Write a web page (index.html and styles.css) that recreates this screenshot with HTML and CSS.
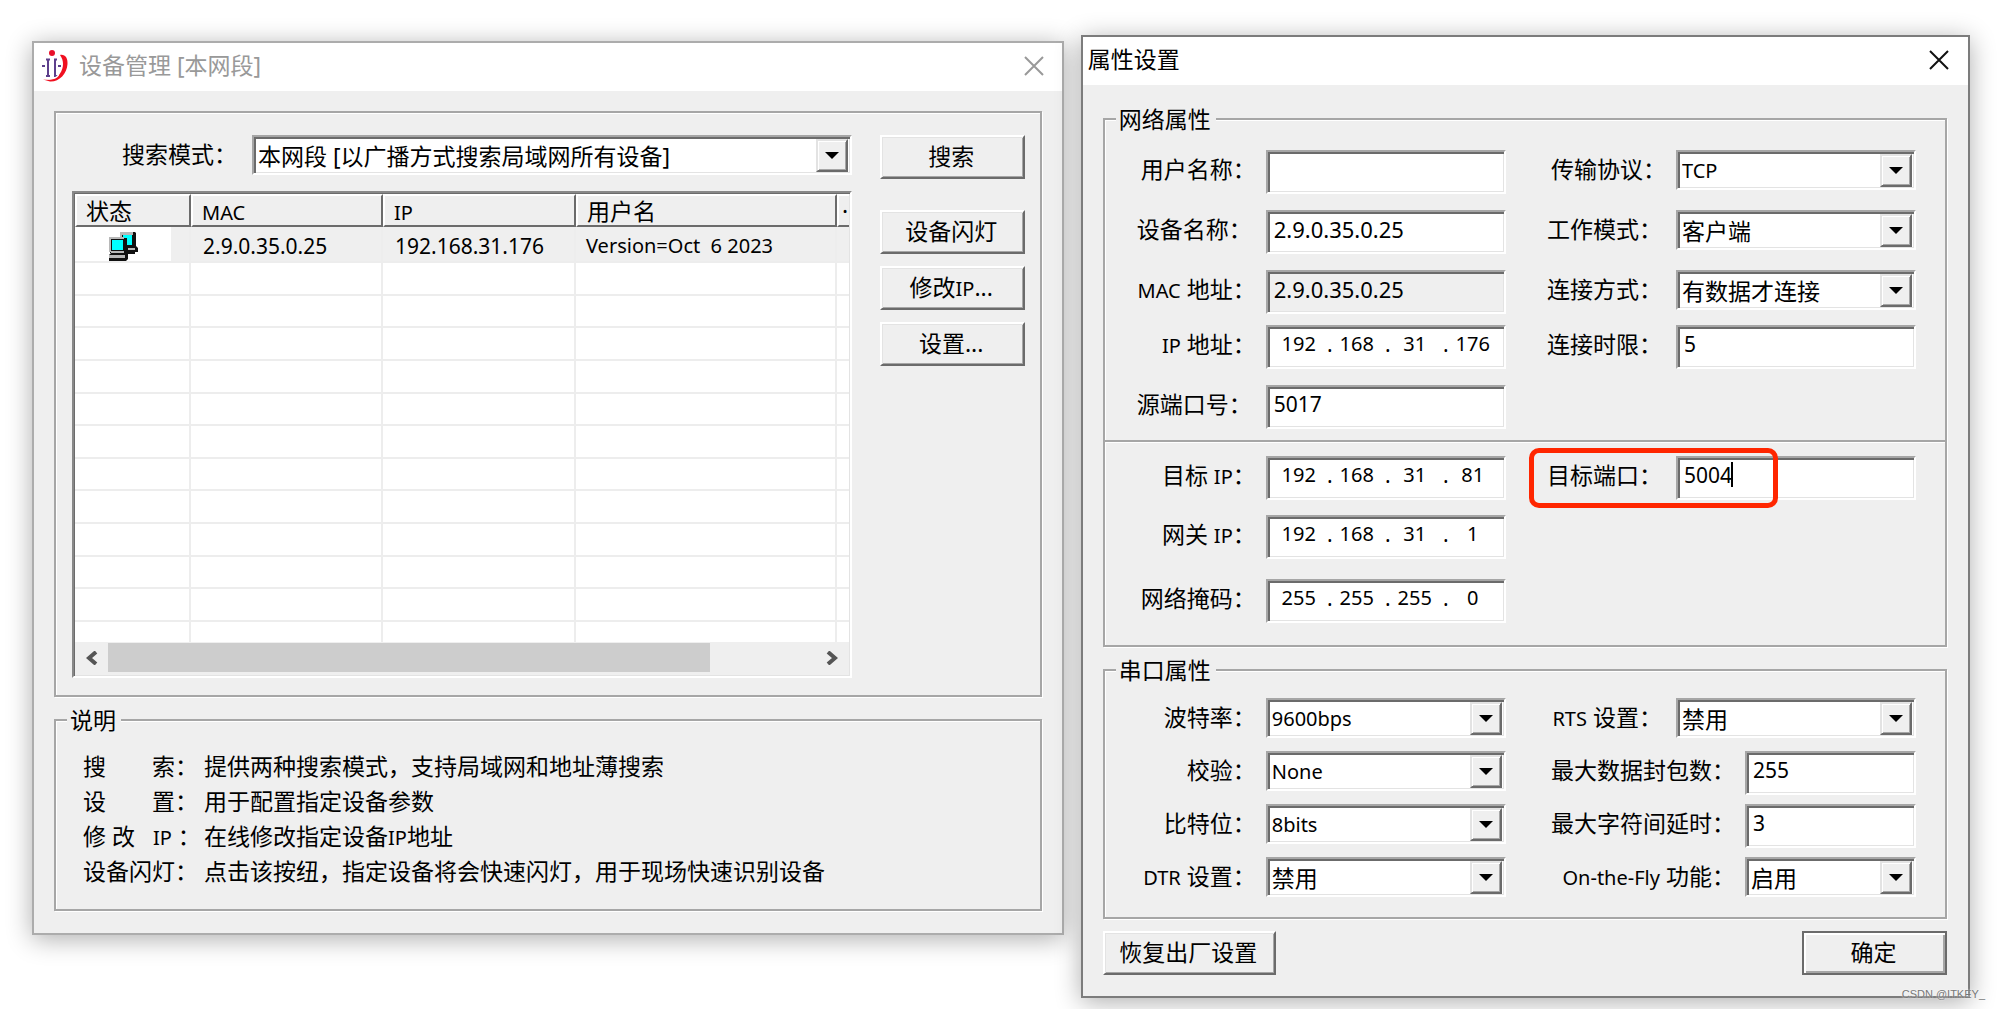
FILE: index.html
```html
<!DOCTYPE html>
<html lang="zh-CN">
<head>
<meta charset="utf-8">
<meta name="viewport" content="width=device-width, initial-scale=1">
<title>设备管理</title>
<link rel="stylesheet" href="styles.css">
</head>
<body>
<main class="desktop">

  <section class="window window-devices" aria-label="设备管理">
    <header class="titlebar">
      <svg class="logo" viewBox="0 0 26 32" aria-hidden="true">
        <circle cx="10" cy="3" r="3" fill="#e8102a"/>
        <g fill="none" stroke="#5d3f8c" stroke-width="2">
          <path d="M4 9.500h4M6 9v17M4 26h4M12 9.500h3M13 9v17M12 26h4"/>
          <path d="M0 16h3M16 16h3"/>
        </g>
        <path d="M18 5c5-1 8 3 7.500 9C25 24 17 32 8 31.500L1 29.500c9 1 14-1 17-6 4-6 4-13 0-18.500z" fill="#f01020"/>
        <path d="M2 28.500c6 1 11 0 14-4l1 1c-3 4-8 5-15 3z" fill="#fff"/>
      </svg>
      <h1 class="title title-inactive">设备管理 [本网段]</h1>
      <button class="close close-inactive" type="button" aria-label="关闭">
        <svg viewBox="0 0 20 20"><path d="M1 1l18 18M19 1L1 19"/></svg>
      </button>
    </header>

    <div class="content">
      <div class="group search-group">
        <div class="search-main">
          <div class="search-row">
            <label for="mode">搜索模式：</label>
            <span class="combo">
              <select id="mode"><option>本网段 [以广播方式搜索局域网所有设备]</option></select>
              <span class="arrow"></span>
            </span>
          </div>
          <div class="list">
            <table class="devices">
              <colgroup><col class="c-state"><col class="c-mac"><col class="c-ip"><col class="c-user"><col></colgroup>
              <thead>
                <tr><th>状态</th><th><span class="en">MAC</span></th><th><span class="en">IP</span></th><th>用户名</th><th>·</th></tr>
              </thead>
              <tbody>
                <tr class="selected">
                  <td class="state">
                    <span class="state-box">
                      <svg viewBox="0 0 30 30" role="img" aria-label="在线">
                        <path d="M12 1h15l1 1v13l2 2v4h-3v2H17V14H12z" fill="#111"/>
                        <path d="M12 1h13v3H12zM12 4h2v4h-2z" fill="#b8b8b8"/>
                        <path d="M15 4h9v10h-9z" fill="#0ff"/>
                        <path d="M20 17h7v2h-7z" fill="#b8b8b8"/>
                        <path d="M2 7h17v15h1v6l-2 2H1v-6l2-2H2z" fill="#111"/>
                        <path d="M1 6h15v2H3v13H1zM1 24h16v3H1z" fill="#b8b8b8"/>
                        <path d="M4 9h11v10H4z" fill="#0ff"/>
                        <path d="M3 20h13v2H3z" fill="#b8b8b8"/>
                      </svg>
                    </span>
                  </td>
                  <td>2.9.0.35.0.25</td><td>192.168.31.176</td><td class="user">Version=Oct&nbsp; 6 2023</td><td></td>
                </tr>
                <tr><td></td><td></td><td></td><td></td><td></td></tr>
                <tr><td></td><td></td><td></td><td></td><td></td></tr>
                <tr><td></td><td></td><td></td><td></td><td></td></tr>
                <tr><td></td><td></td><td></td><td></td><td></td></tr>
                <tr><td></td><td></td><td></td><td></td><td></td></tr>
                <tr><td></td><td></td><td></td><td></td><td></td></tr>
                <tr><td></td><td></td><td></td><td></td><td></td></tr>
                <tr><td></td><td></td><td></td><td></td><td></td></tr>
                <tr><td></td><td></td><td></td><td></td><td></td></tr>
                <tr><td></td><td></td><td></td><td></td><td></td></tr>
                <tr><td></td><td></td><td></td><td></td><td></td></tr>
                <tr class="partial"><td></td><td></td><td></td><td></td><td></td></tr>
              </tbody>
            </table>
            <div class="scrollbar">
              <button class="scroll-btn" type="button" aria-label="向左滚动"><svg viewBox="0 0 12 14"><path d="M10 1L3 7l7 6"/></svg></button>
              <div class="track"><div class="thumb"></div></div>
              <button class="scroll-btn" type="button" aria-label="向右滚动"><svg viewBox="0 0 12 14"><path d="M2 1l7 6-7 6"/></svg></button>
            </div>
          </div>
        </div>
        <div class="actions">
          <button class="btn btn-search" type="button">搜索</button>
          <button class="btn" type="button">设备闪灯</button>
          <button class="btn" type="button">修改<span class="en">IP</span>...</button>
          <button class="btn" type="button">设置...</button>
        </div>
      </div>

      <fieldset class="group">
        <legend>说明</legend>
        <dl class="help">
          <dt>搜　　索：</dt><dd>提供两种搜索模式，支持局域网和地址薄搜索</dd>
          <dt>设　　置：</dt><dd>用于配置指定设备参数</dd>
          <dt>修 改&nbsp;&nbsp; <span class="en">IP</span> ：</dt><dd>在线修改指定设备<span class="en">IP</span>地址</dd>
          <dt>设备闪灯：</dt><dd>点击该按纽，指定设备将会快速闪灯，用于现场快速识别设备</dd>
        </dl>
      </fieldset>
    </div>
  </section>

  <section class="window window-props" aria-label="属性设置">
    <header class="titlebar">
      <h2 class="title">属性设置</h2>
      <button class="close" type="button" aria-label="关闭">
        <svg viewBox="0 0 20 20"><path d="M1 1l18 18M19 1L1 19"/></svg>
      </button>
    </header>

    <form class="content">
      <fieldset class="group">
        <legend>网络属性</legend>
        <div class="fields fields-net">
          <label for="user">用户名称：</label>
          <input class="box" id="user" type="text">
          <label for="proto">传输协议：</label>
          <span class="combo"><select id="proto"><option>TCP</option></select><span class="arrow"></span></span>

          <label class="wide-end" for="dev">设备名称：</label>
          <input class="box dotted" id="dev" type="text" value="2.9.0.35.0.25">
          <label class="wide-end" for="work">工作模式：</label>
          <span class="combo"><select id="work" class="zh"><option>客户端</option></select><span class="arrow"></span></span>

          <label for="mac"><span class="en">MAC</span> 地址：</label>
          <input class="box dotted" id="mac" type="text" value="2.9.0.35.0.25" readonly>
          <label class="wide-end" for="conn">连接方式：</label>
          <span class="combo"><select id="conn" class="zh"><option>有数据才连接</option></select><span class="arrow"></span></span>

          <label for="ip"><span class="en">IP</span> 地址：</label>
          <span class="box ip">
            <input id="ip" value="192"><i>.</i><input aria-label="IP 2" value="168"><i>.</i><input aria-label="IP 3" value="31"><i>.</i><input aria-label="IP 4" value="176">
          </span>
          <label class="wide-end" for="limit">连接时限：</label>
          <input class="box" id="limit" type="text" value="5">

          <label class="wide-end" for="sport">源端口号：</label>
          <input class="box" id="sport" type="text" value="5017">
        </div>
        <hr>
        <div class="fields fields-target">
          <label for="tip">目标 <span class="en">IP</span>：</label>
          <span class="box ip">
            <input id="tip" value="192"><i>.</i><input aria-label="目标 IP 2" value="168"><i>.</i><input aria-label="目标 IP 3" value="31"><i>.</i><input aria-label="目标 IP 4" value="81">
          </span>
          <div class="pair port">
            <label class="wide-end" for="tport">目标端口：</label>
            <input class="box" id="tport" type="text" value="5004">
            <span class="caret"></span>
            <span class="marker"></span>
          </div>

          <label for="gip">网关 <span class="en">IP</span>：</label>
          <span class="box ip">
            <input id="gip" value="192"><i>.</i><input aria-label="网关 IP 2" value="168"><i>.</i><input aria-label="网关 IP 3" value="31"><i>.</i><input aria-label="网关 IP 4" value="1">
          </span>
          <span class="pair"></span>

          <label for="mask">网络掩码：</label>
          <span class="box ip">
            <input id="mask" value="255"><i>.</i><input aria-label="掩码 2" value="255"><i>.</i><input aria-label="掩码 3" value="255"><i>.</i><input aria-label="掩码 4" value="0">
          </span>
        </div>
      </fieldset>

      <fieldset class="group">
        <legend>串口属性</legend>
        <div class="fields fields-serial">
          <label for="baud">波特率：</label>
          <span class="combo"><select id="baud"><option>9600bps</option></select><span class="arrow"></span></span>
          <label class="wide-end" for="rts"><span class="en">RTS</span> 设置：</label>
          <span class="combo"><select id="rts" class="zh"><option>禁用</option></select><span class="arrow"></span></span>

          <label for="parity">校验：</label>
          <span class="combo"><select id="parity"><option>None</option></select><span class="arrow"></span></span>
          <div class="pair long">
            <label for="maxpack">最大数据封包数：</label>
            <input class="box" id="maxpack" type="text" value="255">
          </div>

          <label for="bits">比特位：</label>
          <span class="combo"><select id="bits"><option>8bits</option></select><span class="arrow"></span></span>
          <div class="pair long">
            <label for="delay">最大字符间延时：</label>
            <input class="box" id="delay" type="text" value="3">
          </div>

          <label for="dtr"><span class="en">DTR</span> 设置：</label>
          <span class="combo"><select id="dtr" class="zh"><option>禁用</option></select><span class="arrow"></span></span>
          <div class="pair long">
            <label for="fly"><span class="en">On-the-Fly</span> 功能：</label>
            <span class="combo"><select id="fly" class="zh"><option>启用</option></select><span class="arrow"></span></span>
          </div>
        </div>
      </fieldset>

      <footer class="footer">
        <button class="btn btn-reset" type="button">恢复出厂设置</button>
        <button class="btn btn-default" type="button">确定</button>
      </footer>
    </form>
  </section>

  <span class="watermark">CSDN @ITKEY_</span>
</main>
</body>
</html>
```
FILE: styles.css
```css
* { box-sizing: border-box; }

:root {
  --face: #efefef;
  --light: #e3e3e3;
  --mid: #a6a6a6;
  --dark: #6b6b6b;
}

body {
  margin: 0;
  background: #fff;
  color: #000;
  font: 23px/38px "Noto Sans", "Noto Sans CJK SC", sans-serif;
}

input, select, button { font: inherit; color: inherit; }

.en { font-size: 20px; line-height: 1; }

.desktop {
  position: relative;
  display: flex;
  align-items: flex-start;
  gap: 17px;
  padding: 35px 30px 11px 32px;
}

/* Windows */
.window {
  min-width: 0;
  background: var(--face);
  border: 2px solid #acacac;
  box-shadow: 0 4px 24px rgba(0, 0, 0, .32);
}
.window-devices { flex: 1032 1 0; margin-top: 6px; }
.window-props { flex: 889 1 0; border-color: #7c7c7c; }

.titlebar {
  display: flex;
  align-items: center;
  height: 48px;
  padding: 0 18px 2px 8px;
  background: #fff;
}
.window-props .titlebar { padding-left: 5px; padding-right: 19px; }
.logo { width: 26px; height: 32px; margin-right: 11px; }
.title { flex: 1; margin: 0; font-size: 23px; font-weight: 400; line-height: 36px; padding-bottom: 2px; }
.title-inactive { color: #999; }
.close {
  display: flex;
  width: 20px;
  height: 20px;
  padding: 0;
  border: 0;
  background: none;
}
.close path { fill: none; stroke: #111; stroke-width: 2; }
.close-inactive path { stroke: #999; }

.content { padding: 20px 20px 22px; }
.window-props .content { padding: 19px 21px 21px 20px; }

.group {
  min-width: 0;
  margin: 0;
  padding: 0;
  border: 2px solid var(--mid);
  box-shadow: inset 1px 1px 0 #fff, 1px 1px 0 #fff;
}
.group + .group { margin-top: 8px; }
legend {
  margin-left: 11px;
  padding: 0 5px 0 3px;
  background: var(--face);
  line-height: 30px;
}

/* Sunken fields */
.box, .combo select {
  display: block;
  width: 100%;
  border: 2px solid;
  border-color: var(--mid) #fff #fff var(--mid);
  border-radius: 0;
  box-shadow: inset 2px 2px 0 var(--dark), inset -1px -1px 0 var(--light);
  background: #fff;
  outline: none;
}
.box { height: 44px; padding: 0 6px 6px; font-size: 21px; }
.box.dotted { font-size: 22px; }
.box:read-only:not(.ip) { background: var(--face); }
.combo { position: relative; display: block; }
.combo select {
  height: 40px;
  padding: 0 36px 2px 4px;
  appearance: none;
  font-size: 20px;
}
.combo select.zh, #mode { font-size: 23px; }
.arrow {
  position: absolute;
  top: 4px;
  right: 4px;
  width: 32px;
  height: 33px;
  background: var(--face);
  border: 2px solid;
  border-color: var(--light) var(--dark) var(--dark) var(--light);
  box-shadow: inset 1px 1px 0 #fff, inset -1px -1px 0 var(--mid);
  pointer-events: none;
}
.arrow::after {
  content: "";
  position: absolute;
  top: 11px;
  left: 7px;
  border: 7px solid transparent;
  border-top-color: #000;
  border-bottom: 0;
}

.btn {
  height: 44px;
  padding: 0 2px 2px 0;
  line-height: 36px;
  background: var(--face);
  border: 2px solid;
  border-color: #fff var(--dark) var(--dark) #fff;
  box-shadow: inset 1px 1px 0 var(--light), inset -1px -1px 0 var(--mid);
}

/* Device list */
.search-group {
  display: flex;
  gap: 28px;
  padding: 22px 15px 17px 16px;
}
.search-main { flex: 1; min-width: 0; }
.search-row {
  display: flex;
  gap: 15px;
  margin-bottom: 16px;
  padding-left: 50px;
}
.search-row .combo { flex: 1; min-width: 0; }

.list {
  height: 487px;
  overflow: hidden;
  padding: 1px;
  background: #fff;
  border: 2px solid;
  border-color: #888 #fff #fff #888;
  box-shadow: inset 1px 1px 0 var(--dark), inset -1px -1px 0 var(--light);
}
.devices {
  width: 100%;
  height: 448px;
  table-layout: fixed;
  border-collapse: separate;
  border-spacing: 0;
}
.c-state { width: 116px; }
.c-mac { width: 192px; }
.c-ip { width: 193px; }
.c-user { width: 261px; }
.devices th {
  height: 33px;
  padding: 0 0 0 9px;
  overflow: hidden;
  background: var(--face);
  border: 2px solid;
  border-color: #fff var(--dark) var(--dark) #fff;
  font-weight: 400;
  line-height: 28px;
  text-align: left;
  white-space: nowrap;
}
.devices th:last-child { padding-left: 3px; border-right: 0; }
.devices td {
  padding: 4px 0 0 12px;
  border: solid #ededed;
  border-width: 0 2px 2px 0;
  font-size: 21px;
  line-height: 28px;
  white-space: nowrap;
}
.devices td:last-child { border-right: 0; }
.devices .selected { height: 36px; }
.devices .selected td { background: var(--face); }
.devices td.user { padding-left: 10px; font-size: 20px; }
.devices td.state { padding: 0; }
.state-box {
  display: flex;
  justify-content: center;
  width: 96px;
  background: #fff;
  padding: 4px 0 0;
}
.state-box svg { width: 30px; height: 30px; }
.partial { height: 20px; }
.devices .partial td { border-bottom: 0; }

.scrollbar {
  display: flex;
  height: 33px;
  padding: 1px 0 3px;
  background: var(--face);
}
.scroll-btn {
  display: flex;
  align-items: center;
  justify-content: center;
  width: 33px;
  padding: 0;
  border: 0;
  background: none;
}
.scroll-btn svg { width: 12px; height: 14px; }
.scroll-btn path { fill: none; stroke: #555; stroke-width: 4; }
.track { flex: 1; }
.thumb { width: 85%; height: 100%; background: #cdcdcd; }

.actions {
  display: flex;
  flex-direction: column;
  gap: 12px;
  width: 145px;
}
.btn-search { margin-bottom: 19px; }

.help {
  display: grid;
  grid-template-columns: 121px 1fr;
  grid-auto-rows: 35px;
  margin: 0;
  padding: 14px 0 20px 27px;
  line-height: 35px;
}
.help dt { white-space: pre; }
.help dd { margin: 0; }

/* Property form */
.fields {
  display: grid;
  grid-template-columns: 161fr 240fr 170fr 240fr;
  align-items: start;
  padding-right: 29px;
}
.fields label { padding-right: 10px; text-align: right; white-space: nowrap; }
.fields label.wide-end { padding-right: 14px; }
.fields-net { grid-template-rows: 60px 60px 55px 60px 55px; padding-top: 16px; }
.fields-target { grid-template-rows: 59px 64px 66px; padding-top: 14px; }
.fields-serial { grid-template-rows: 53px 53px 53px 60px; padding-top: 13px; }

.pair {
  grid-column: 3 / 5;
  position: relative;
  display: grid;
  grid-template-columns: 170fr 240fr;
}
.pair.long { grid-template-columns: 239fr 171fr; }

.ip { display: flex; padding: 0 0 6px 10px; line-height: 34px; }
.ip input {
  width: 42px;
  padding: 0;
  border: 0;
  background: none;
  outline: none;
  font-size: 20px;
  text-align: center;
}
.ip i { width: 16px; padding-right: 3px; font-style: normal; text-align: right; }

.caret {
  position: absolute;
  top: 6px;
  left: 225px;
  width: 2px;
  height: 25px;
  background: #000;
}
.marker {
  position: absolute;
  top: -8px;
  left: 23px;
  width: 249px;
  height: 60px;
  border: 5px solid #ff2600;
  border-radius: 10px;
}

hr {
  height: 2px;
  margin: 0;
  border: 0;
  background: var(--mid);
  box-shadow: 0 1px 0 #fff;
}

.footer {
  display: flex;
  justify-content: space-between;
  margin-top: 12px;
}
.btn-reset { width: 173px; }
.btn-default {
  width: 145px;
  border-color: var(--dark);
  box-shadow: inset 2px 2px 0 #fff, inset -2px -2px 0 var(--mid);
}

.watermark {
  position: absolute;
  right: 15px;
  bottom: 8px;
  color: #777;
  font: 11px/14px "Liberation Sans", Arial, sans-serif;
  text-shadow: 0 0 2px #fff;
}
```
